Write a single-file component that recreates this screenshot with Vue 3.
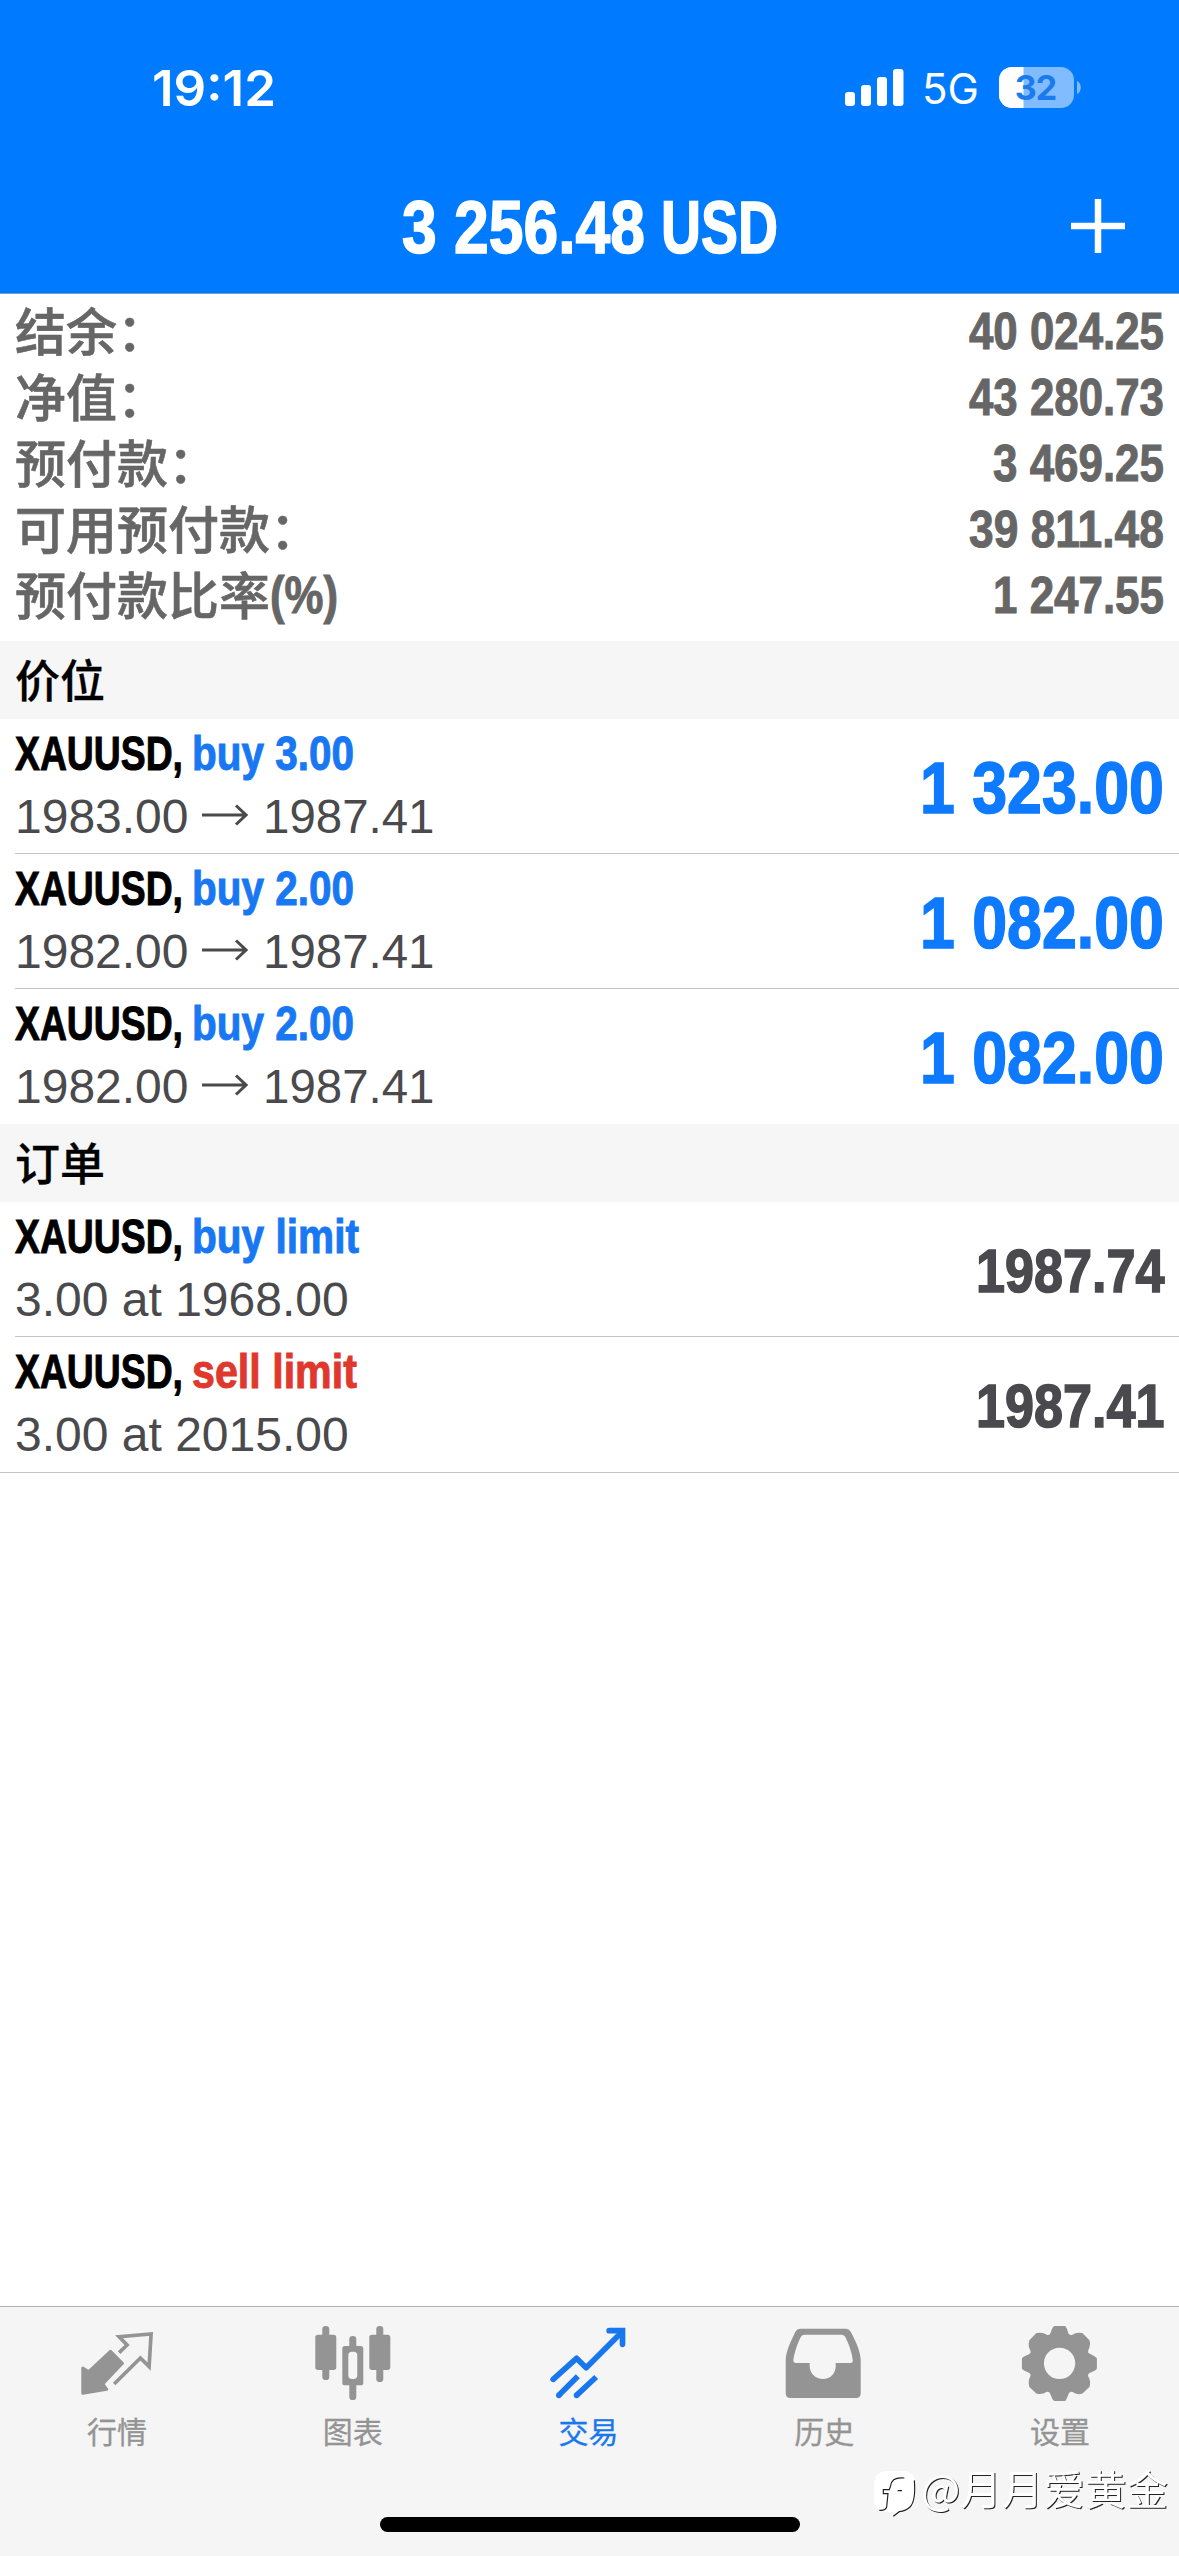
<script setup>
import { h } from 'vue'

const COND = "'Liberation Sans Narrow', 'Liberation Sans', sans-serif"
const INTER = 'Inter, sans-serif'
const CJK = "'Noto Sans CJK SC', sans-serif"

const ctx = document.createElement('canvas').getContext('2d')

// Text scaled horizontally to an exact advance width, used for the condensed face.
const Fit = (props) => {
  const font = `${props.wt || 700} ${props.s}px ${props.f || COND}`
  ctx.font = font
  const k = props.w / ctx.measureText(props.t).width
  return h('svg', { width: props.w, height: props.h, class: 'fit' }, [
    h('text', { x: 0, y: props.b, style: { font }, transform: `scale(${k.toFixed(4)} 1)` }, props.t),
  ])
}
Fit.props = ['t', 'w', 'h', 'b', 's', 'f', 'wt']

const summary = [
  { label: '结余：', value: '40 024.25', w: 195 },
  { label: '净值：', value: '43 280.73', w: 195 },
  { label: '预付款：', value: '3 469.25', w: 171 },
  { label: '可用预付款：', value: '39 811.48', w: 195 },
  { label: '预付款比率', suffix: '(%)', value: '1 247.55', w: 171 },
]

const positions = [
  { side: 'buy 3.00', open: '1983.00', now: '1987.41', profit: '1 323.00' },
  { side: 'buy 2.00', open: '1982.00', now: '1987.41', profit: '1 082.00' },
  { side: 'buy 2.00', open: '1982.00', now: '1987.41', profit: '1 082.00' },
]

const orders = [
  { side: 'buy limit', kind: 'buy', w: 167, detail: '3.00 at 1968.00', price: '1987.74' },
  { side: 'sell limit', kind: 'sell', w: 165, detail: '3.00 at 2015.00', price: '1987.41' },
]
</script>

<template>
  <div class="screen">
    <header class="header">
      <div class="status">
        <Fit t="19:12" :w="124" :h="60" :b="47" :s="50" :f="INTER" :wt="600" />
        <div class="status-right">
          <svg class="signal" width="59" height="37" viewBox="0 0 59 37" fill="#fff">
            <rect x="0" y="23" width="10" height="14" rx="3" />
            <rect x="16" y="16" width="10" height="21" rx="3" />
            <rect x="32" y="8" width="10" height="29" rx="3" />
            <rect x="48" y="0" width="10.500" height="37" rx="3" />
          </svg>
          <Fit class="network" t="5G" :w="57" :h="37" :b="35" :s="42" :f="INTER" :wt="400" />
          <svg class="battery" width="82" height="41" viewBox="0 0 82 41">
            <defs>
              <clipPath id="level"><rect width="24.500" height="41" /></clipPath>
            </defs>
            <rect width="75" height="41" rx="13" fill="#80bcff" />
            <rect width="75" height="41" rx="13" fill="#fff" clip-path="url(#level)" />
            <path d="M78 14c5 2 5 11 0 13z" fill="#80bcff" />
            <text x="36.500" y="33" text-anchor="middle" class="level">32</text>
          </svg>
        </div>
      </div>
      <div class="nav">
        <div class="title">
          <Fit class="cond" t="3 256.48" :w="243" :h="90" :b="73" :s="74" />
          <Fit class="cond" t="USD" :w="117" :h="90" :b="73" :s="74" />
        </div>
        <svg class="plus" width="54" height="54" viewBox="0 0 54 54">
          <path d="M27 0v54M0 27h54" stroke="#fff" stroke-width="6.500" />
        </svg>
      </div>
    </header>

    <section class="summary">
      <div v-for="s in summary" :key="s.label" class="sum-row">
        <span class="sum-label">{{ s.label }}</span>
        <Fit v-if="s.suffix" class="cond" :t="s.suffix" :w="68" :h="66" :b="53.500" :s="51" />
        <Fit class="cond end" :t="s.value" :w="s.w" :h="66" :b="53.500" :s="51.500" />
      </div>
    </section>

    <h2 class="section">价位</h2>
    <ul class="list">
      <li v-for="(p, i) in positions" :key="i" class="row">
        <div class="info">
          <div class="line">
            <Fit class="cond name" t="XAUUSD," :w="168" :h="62" :b="51" :s="49" />
            <Fit class="cond name buy" :t="p.side" :w="162" :h="62" :b="51" :s="49" />
          </div>
          <div class="detail">
            <span>{{ p.open }}</span>
            <svg class="arrow" width="46" height="22" viewBox="0 0 46 22" fill="none" stroke="currentColor" stroke-width="3">
              <path d="M0 11H44M34 1.500L44 11L34 20.500" />
            </svg>
            <Fit :t="p.now" :w="171.500" :h="70" :b="52" :s="48" :wt="400" f="'Liberation Sans'" />
          </div>
        </div>
        <Fit class="cond profit" :t="p.profit" :w="244" :h="134" :b="94" :s="73" />
      </li>
    </ul>

    <h2 class="section">订单</h2>
    <ul class="list orders">
      <li v-for="o in orders" :key="o.side" class="row">
        <div class="info">
          <div class="line">
            <Fit class="cond name" t="XAUUSD," :w="168" :h="62" :b="51" :s="49" />
            <Fit class="cond name" :class="o.kind" :t="o.side" :w="o.w" :h="62" :b="51" :s="49" />
          </div>
          <div class="detail">{{ o.detail }}</div>
        </div>
        <Fit class="cond price" :t="o.price" :w="188.500" :h="134" :b="90" :s="61" />
      </li>
    </ul>

    <nav class="tabs">
      <div class="tab">
        <svg class="icon" viewBox="236.700 102 234 234">
          <path d="M331 184L367 220L308 282L320 298L248 310V234L266 245Z" fill="currentColor" stroke="currentColor" stroke-width="9" stroke-linejoin="round" />
          <path d="M361 184L381 165L357 140L453 132L447 230L421 204L346 278" fill="none" stroke="currentColor" stroke-width="11" stroke-linejoin="miter" stroke-linecap="square" />
        </svg>
        <span>行情</span>
      </div>
      <div class="tab">
        <svg class="icon" viewBox="944.100 102 234 234" fill="currentColor">
          <rect x="966" y="108" width="21" height="162" rx="10" />
          <rect x="945" y="134" width="63" height="106" rx="8" />
          <rect x="1128" y="108" width="21" height="168" rx="10" />
          <rect x="1107" y="134" width="63" height="106" rx="8" />
          <rect x="1047" y="138" width="21" height="45" rx="10" />
          <rect x="1047" y="270" width="21" height="60" rx="10" />
          <path fill-rule="evenodd" d="M1034 168h47q8 0 8 8v102q0 8-8 8h-47q-8 0-8-8V176q0-8 8-8zM1055 185q-11 0-11 11v60q0 11 11 11h5q11 0 11-11v-60q0-11-11-11z" />
        </svg>
        <span>图表</span>
      </div>
      <div class="tab active">
        <svg class="icon" viewBox="451.500 102 234 234" fill="none" stroke="currentColor" stroke-width="17">
          <path d="M461 268L531 205L560 233L668 125" stroke-linejoin="round" stroke-linecap="round" />
          <path d="M629 122H669V163" stroke-linecap="round" stroke-linejoin="miter" />
          <path d="M478 316L535 259M531 316L590 261" />
          <path d="M478 316h.1M531 316h.1" stroke-linecap="round" />
        </svg>
        <span>交易</span>
      </div>
      <div class="tab">
        <svg class="icon" viewBox="78.900 102 234 234" fill="currentColor">
          <path fill-rule="evenodd" d="M121 116H259Q268 116 273 125C285 148 303 183 303 212V310Q303 324 289 324H92Q78 324 78 310V212C78 183 96 148 107 125Q112 116 121 116ZM135 134Q126 134 122 143C113 161 104 188 101 210Q100 219 109 219H150V228C150 251 168 267 190 267S228 251 228 228V219H271Q281 219 279 210C277 188 267 161 258 143Q254 134 245 134Z" />
        </svg>
        <span>历史</span>
      </div>
      <div class="tab">
        <svg class="icon" viewBox="786.300 102 234 234" fill="currentColor">
          <path fill-rule="evenodd" stroke="currentColor" stroke-width="8" stroke-linejoin="round" d="M884 112H914C920 120 919 128 923 134Q930 142 939 138C948 131 957 131 966 133L985 153C988 162 986 171 981 180Q978 190 986 194C994 198 1000 200 1007 206V235C1000 242 990 242 985 247Q978 253 981 260C988 270 988 279 985 289L966 307C956 310 947 308 939 302Q930 299 924 307C920 314 919 322 914 329H884C878 322 877 313 873 307Q868 299 859 302C850 308 841 310 831 307L812 289C809 279 810 270 815 260Q819 252 812 247C806 242 797 241 790 235V206C797 200 806 199 812 194Q819 188 815 180C810 171 809 162 812 153L831 133C841 131 850 131 859 138Q868 142 874 134C878 127 878 119 884 112ZM899 169A51 51 0 1 0 899 271A51 51 0 1 0 899 169Z" />
        </svg>
        <span>设置</span>
      </div>
      <div class="home"></div>
      <div class="mark">
        <svg width="44" height="48" viewBox="0 0 132 144">
          <path d="M38 0H88Q124 2 124 40V76Q122 116 84 122L62 136L58 122H36Q0 118 0 84V38Q2 2 38 0Z" fill="#fff" />
          <path d="M91 21C63 18 52 26 50 44L46 56H28V68H42L38 108Q34 120 16 118M71 59H84M121 28Q126 90 108 108Q96 120 76 122L58 136" fill="none" stroke="#222" stroke-width="3.500" />
        </svg>
        <Fit class="mark-text" t="@月月爱黄金" :w="247" :h="48" :b="34" :s="41" :f="CJK" :wt="400" />
      </div>
    </nav>
  </div>
</template>

<style>
body {
  margin: 0;
  background: #fff;
}
</style>

<style scoped>
.screen {
  width: 1179px;
  height: 2556px;
  display: flex;
  flex-direction: column;
  background: #fff;
  font-family: 'Liberation Sans', 'Noto Sans CJK SC', sans-serif;
  overflow: hidden;
}
.fit {
  display: block;
  flex: none;
  overflow: visible;
  fill: currentColor;
}
.header {
  box-sizing: border-box;
  height: 294px;
  background: #007aff;
  border-bottom: 1px solid #6a9fd8;
  color: #fff;
}
.status {
  height: 180px;
  box-sizing: border-box;
  padding: 59px 98px 0 152px;
  display: flex;
  justify-content: space-between;
}
.status-right {
  display: flex;
  align-items: flex-start;
}
.signal {
  margin-top: 10px;
}
.network {
  margin: 10px 20px 0 18px;
}
.battery {
  margin-top: 8px;
}
.level {
  font: 700 34px Inter, sans-serif;
  letter-spacing: -1px;
  fill: #1a7aee;
}
.nav {
  display: grid;
  grid-template-columns: 1fr 376px 1fr;
}
.title {
  grid-column: 2;
  display: flex;
  justify-content: space-between;
}
.plus {
  justify-self: end;
  margin: 19px 54px 0 0;
}
.cond {
  stroke: currentColor;
  stroke-width: 1px;
}
.title .cond,
.profit,
.price {
  stroke-width: 1.6px;
}
.summary {
  padding: 2px 15px 15px;
  color: #666;
}
.sum-row {
  display: flex;
  height: 66px;
}
.sum-label {
  font: 500 51px/66px 'Noto Sans CJK SC', sans-serif;
  -webkit-text-stroke: 0.6px currentColor;
}
.end {
  margin-left: auto;
}
.section {
  margin: 0;
  box-sizing: border-box;
  height: 78px;
  padding: 0 15px 3px;
  background: #f6f6f6;
  color: #000;
  font: 500 45px/75px 'Noto Sans CJK SC', sans-serif;
  -webkit-text-stroke: 0.3px currentColor;
}
.list {
  margin: 0;
  padding: 0 0 0 15px;
  list-style: none;
}
.row {
  box-sizing: border-box;
  height: 135px;
  padding-right: 15px;
  display: flex;
  justify-content: space-between;
  border-bottom: 1px solid #c4c4c6;
}
.row:last-child {
  border-bottom-color: transparent;
}
.orders {
  border-bottom: 1px solid #c4c4c6;
}
.line {
  display: flex;
  gap: 9px;
}
.name {
  color: #000;
}
.name.buy {
  color: #1877f2;
}
.name.sell {
  color: #e0382c;
}
.detail {
  display: flex;
  height: 70px;
  font-size: 48px;
  line-height: 72px;
  color: #4a4a4d;
  white-space: nowrap;
}
.arrow {
  margin: 23px 15px 0 13.5px;
}
.profit {
  color: #0d7aff;
}
.price {
  color: #4a4a4e;
}
.tabs {
  position: relative;
  margin-top: auto;
  box-sizing: border-box;
  height: 250px;
  padding-top: 17px;
  display: flex;
  border-top: 1px solid #b0b0b0;
  background: #f5f5f5;
  color: #949494;
}
.tab {
  flex: 1;
  display: flex;
  flex-direction: column;
  align-items: center;
  gap: 10px;
  font: 400 30px/36px 'Noto Sans CJK SC', sans-serif;
}
.tab span {
  margin-right: 2px;
  -webkit-text-stroke: 0.3px currentColor;
}
.active {
  color: #1877ee;
}
.icon {
  width: 78px;
  height: 78px;
  overflow: visible;
}
.home {
  position: absolute;
  left: 380px;
  bottom: 24px;
  width: 420px;
  height: 15px;
  border-radius: 8px;
  background: #000;
}
.mark {
  position: absolute;
  right: 11px;
  bottom: 37px;
  display: flex;
  gap: 3px;
}
.mark-text {
  color: #fff;
  filter: drop-shadow(1.5px 1.5px 0 #222);
}
</style>
